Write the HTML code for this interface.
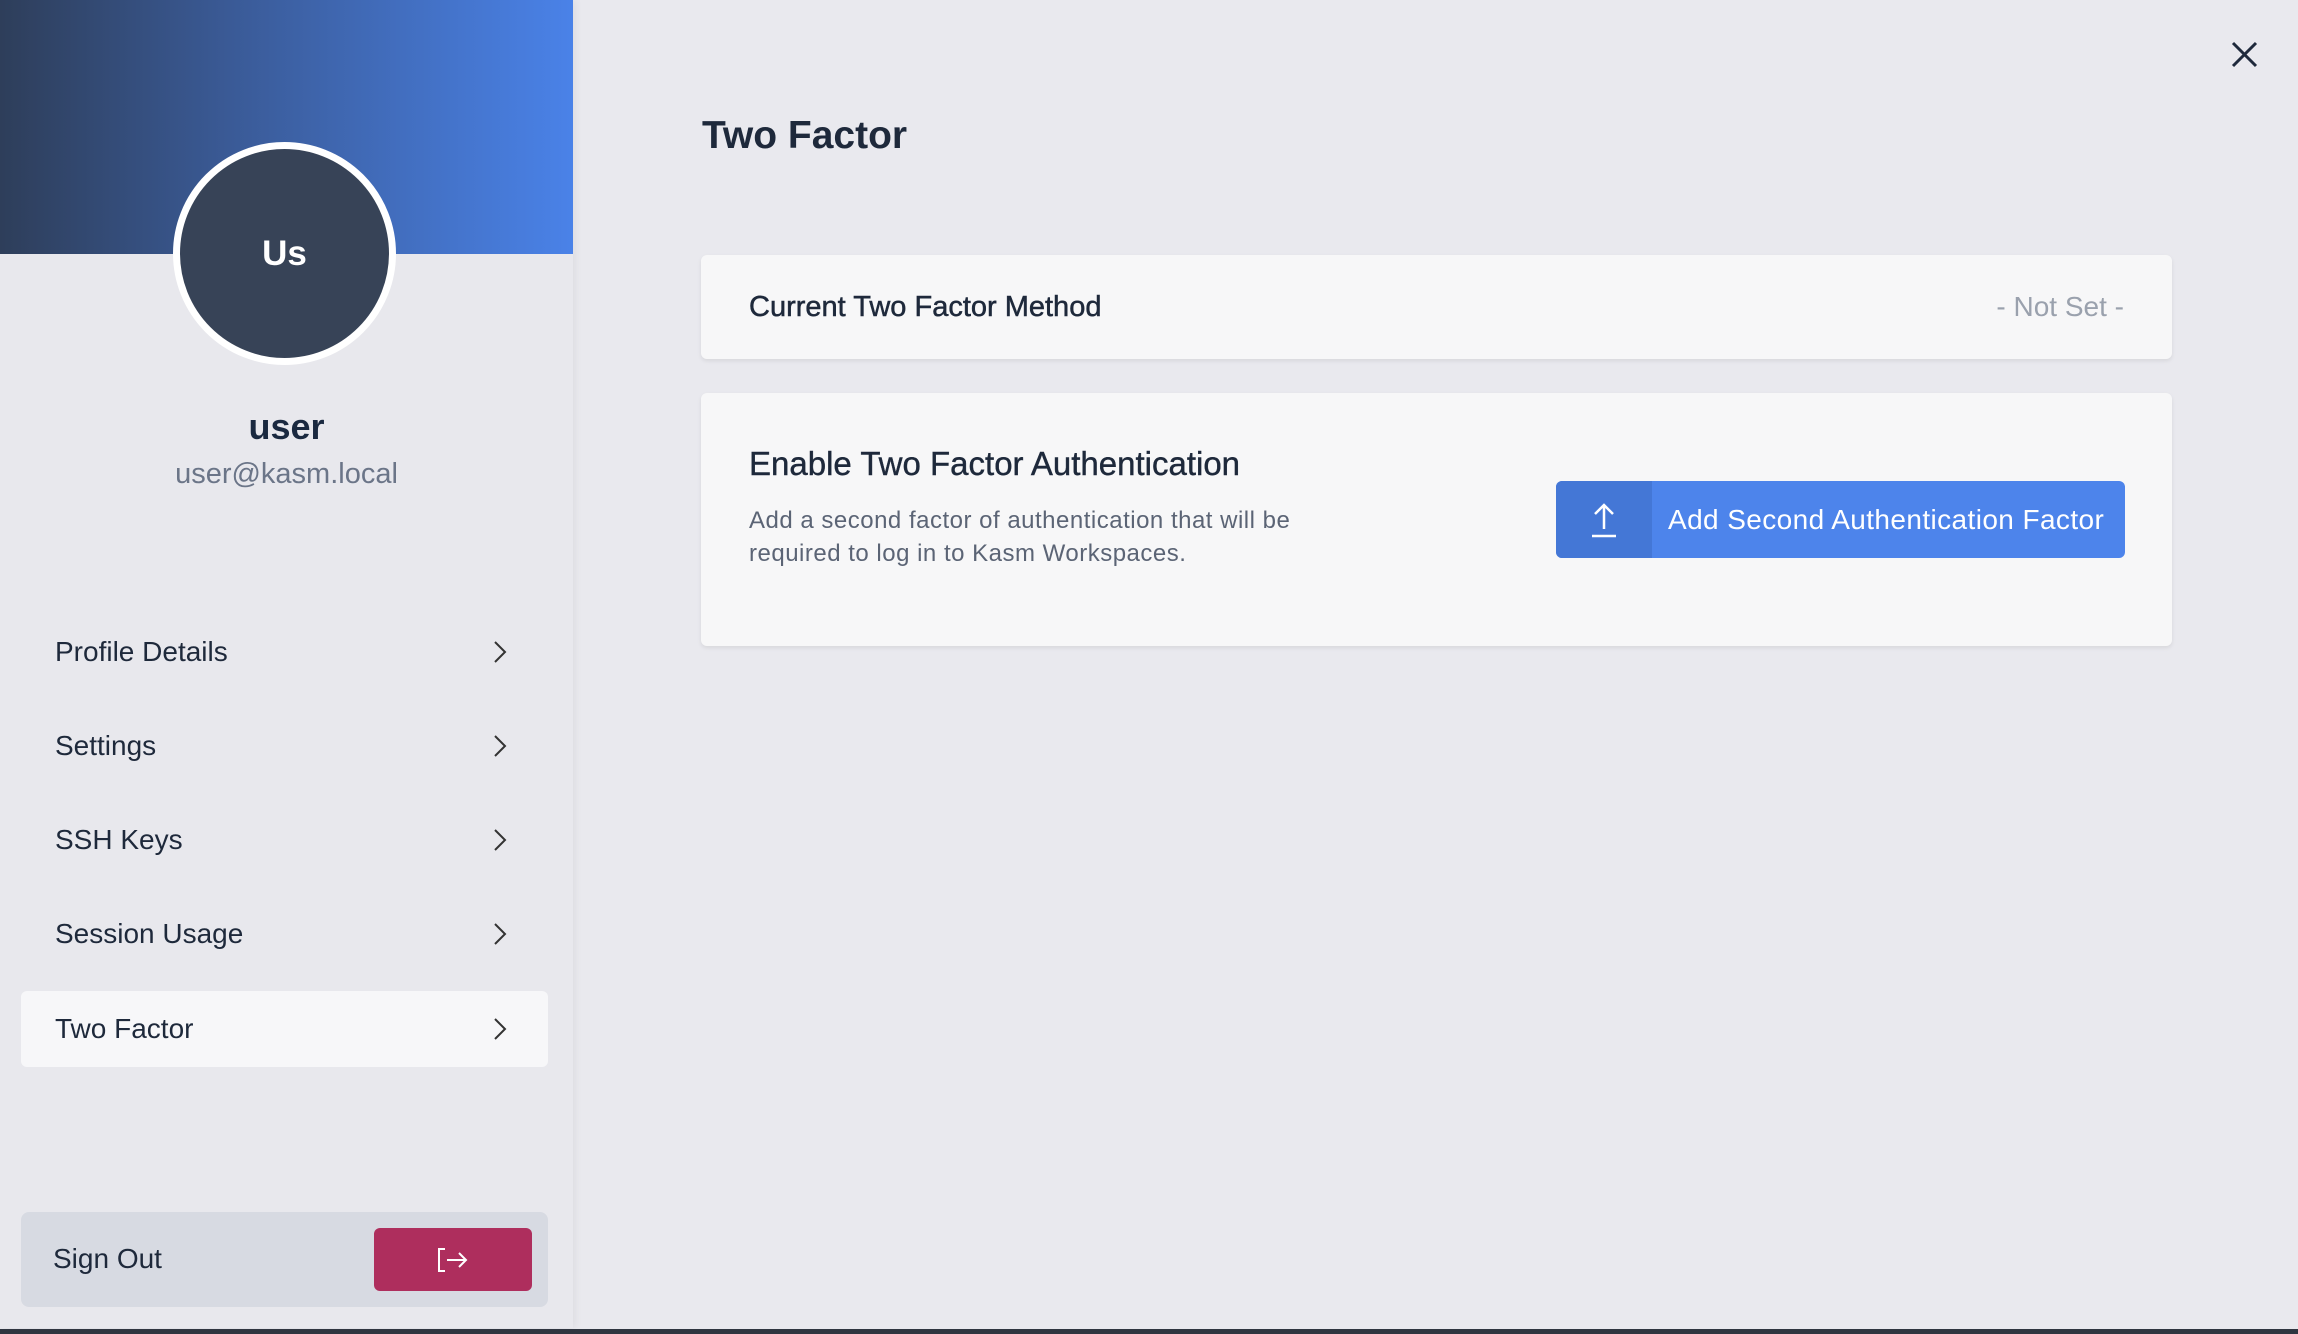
<!DOCTYPE html>
<html><head><meta charset="utf-8"><style>
*{margin:0;padding:0;box-sizing:border-box}
body{width:2298px;height:1334px;overflow:hidden;background:#e9e9ee;font-family:"Liberation Sans",sans-serif;position:relative;color:#1e293b}
.side{position:absolute;left:0;top:0;width:573px;height:1328px;background:#e8e8ed;box-shadow:2px 0 8px rgba(0,0,0,.06)}
.hdr{position:absolute;left:0;top:0;width:573px;height:254px;background:linear-gradient(90deg,#2e3e5a 0%,#3a5a96 40%,#4a82e8 100%)}
.av{position:absolute;left:173px;top:142px;width:223px;height:223px;border-radius:50%;background:#374357;border:7px solid #fff;color:#fff;font-size:35px;font-weight:bold;display:flex;align-items:center;justify-content:center}
.name{position:absolute;left:0;width:573px;text-align:center;top:406px;font-size:36px;font-weight:bold;color:#1a2940}
.mail{position:absolute;left:0;width:573px;text-align:center;top:458px;font-size:29px;color:#6b7588}
.item{position:absolute;left:21px;width:527px;height:76px;font-size:28px;color:#1e293b;display:flex;align-items:center;padding-left:34px}
.item.sel{background:#f7f7f9;border-radius:6px}
.item svg{position:absolute;left:472px;top:26px}
.so{position:absolute;left:21px;top:1212px;width:527px;height:95px;background:#d7dae2;border-radius:8px}
.so span{position:absolute;left:32px;top:31px;font-size:28px;color:#1e293b}
.sob{position:absolute;left:353px;top:16px;width:158px;height:63px;background:#ae2e5d;border-radius:6px}
.bot{position:absolute;left:0;top:1329px;width:2298px;height:5px;background:#2f3540}
h1{position:absolute;left:702px;top:114px;font-size:39px;font-weight:bold;color:#1e293b}
.card{position:absolute;left:701px;width:1471px;background:#f7f7f8;border-radius:6px;box-shadow:0 2px 4px rgba(0,0,0,.08)}
</style></head><body>
<div class="side">
<div class="hdr"></div>
<div class="av">Us</div>
<div class="name">user</div>
<div class="mail">user@kasm.local</div>
<div class="item" style="top:614px">Profile Details<svg width="14" height="24" viewBox="0 0 14 24"><path d="M2 2l10 10-10 10" fill="none" stroke="#333" stroke-width="2"/></svg></div>
<div class="item" style="top:708px">Settings<svg width="14" height="24" viewBox="0 0 14 24"><path d="M2 2l10 10-10 10" fill="none" stroke="#333" stroke-width="2"/></svg></div>
<div class="item" style="top:802px">SSH Keys<svg width="14" height="24" viewBox="0 0 14 24"><path d="M2 2l10 10-10 10" fill="none" stroke="#333" stroke-width="2"/></svg></div>
<div class="item" style="top:896px">Session Usage<svg width="14" height="24" viewBox="0 0 14 24"><path d="M2 2l10 10-10 10" fill="none" stroke="#333" stroke-width="2"/></svg></div>
<div class="item sel" style="top:991px">Two Factor<svg width="14" height="24" viewBox="0 0 14 24"><path d="M2 2l10 10-10 10" fill="none" stroke="#333" stroke-width="2"/></svg></div>
<div class="so"><span>Sign Out</span><div class="sob"><svg style="position:absolute;left:63px;top:19px" width="32" height="26" viewBox="0 0 32 26"><path d="M8 2H2v22h6M10 13h19M22 6l7 7-7 7" fill="none" stroke="#fff" stroke-width="2"/></svg></div></div>
</div>
<div class="bot"></div>
<svg style="position:absolute;left:2231px;top:41px" width="27" height="27" viewBox="0 0 27 27"><path d="M2 2l23 23M25 2L2 25" stroke="#1e293b" stroke-width="3"/></svg>
<h1>Two Factor</h1>
<div class="card" style="top:255px;height:104px">
<div style="position:absolute;left:48px;top:36px;font-size:29px;color:#1e293b;-webkit-text-stroke:0.5px #1e293b">Current Two Factor Method</div>
<div style="position:absolute;right:48px;top:36px;font-size:28px;color:#9aa1ad">- Not Set -</div>
</div>
<div class="card" style="top:393px;height:253px">
<div style="position:absolute;left:48px;top:52px;font-size:33px;color:#1e293b;-webkit-text-stroke:0.4px #1e293b">Enable Two Factor Authentication</div>
<div style="position:absolute;left:48px;top:111px;font-size:24px;letter-spacing:0.5px;line-height:33px;color:#5b6475">Add a second factor of authentication that will be<br>required to log in to Kasm Workspaces.</div>
<div style="position:absolute;left:855px;top:88px;width:569px;height:77px;background:#4d84eb;border-radius:6px;overflow:hidden">
<div style="position:absolute;left:0;top:0;width:96px;height:77px;background:#4477d6"><svg style="position:absolute;left:34px;top:21px" width="28" height="36" viewBox="0 0 28 36"><path d="M14 27V3M5 12l9-9 9 9M2 34h24" fill="none" stroke="#fff" stroke-width="2.5"/></svg></div>
<div style="position:absolute;left:112px;top:23px;font-size:28px;letter-spacing:0.4px;color:#fff">Add Second Authentication Factor</div>
</div>
</div>
</body></html>
